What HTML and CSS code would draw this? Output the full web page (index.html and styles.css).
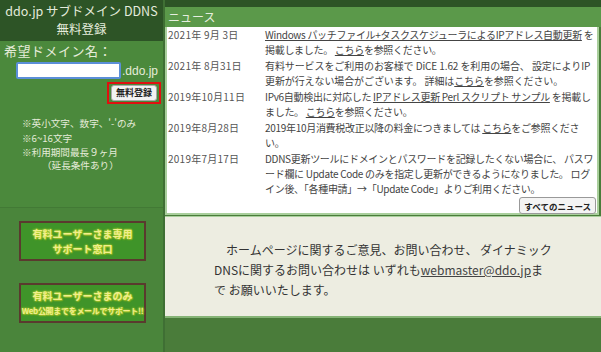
FILE: index.html
```html
<!DOCTYPE html>
<html lang="ja">
<head>
<meta charset="utf-8">
<link rel="stylesheet" href="styles.css">
</head>
<body>
<div class="page">
  <aside class="side">
    <div class="side-head">ddo.jp サブドメイン DDNS<br>無料登録</div>
    <div class="side-body">
      <div class="label">希望ドメイン名：</div>
      <div class="domain-row"><input class="domain-input" type="text"><span class="suffix">.ddo.jp</span></div>
      <div class="btn-row"><span class="btn-frame"><button class="btn">無料登録</button></span></div>
      <ul class="notes">
        <li>※英小文字、数字、'-'のみ</li>
        <li>※6~16文字</li>
        <li>※利用期間最長９ヶ月</li>
        <li class="indent">（延長条件あり）</li>
      </ul>
    </div>
    <div class="side-foot">
      <div class="banner"><span>有料ユーザーさま専用</span><span>サポート窓口</span></div>
      <div class="banner"><span>有料ユーザーさまのみ</span><span class="small">Web公開までをメールでサポート!!</span></div>
    </div>
  </aside>
  <main class="main">
    <div class="topstrip"></div>
    <div class="news-head">ニュース</div>
    <div class="news">
      <div class="row"><div class="date">2021年 9月 3日</div><div class="text"><a href="#">Windows パッチファイル+タスクスケジューラによるIPアドレス自動更新</a> を掲載しました。 <a href="#">こちら</a>を参照ください。</div></div>
      <div class="row"><div class="date">2021年 8月31日</div><div class="text loose">有料サービスをご利用のお客様で DiCE 1.62 を利用の場合、 設定によりIP更新が行えない場合がございます。 詳細は<a href="#">こちら</a>を参照ください。</div></div>
      <div class="row"><div class="date">2019年10月11日</div><div class="text">IPv6自動検出に対応した <a href="#">IPアドレス更新 Perl スクリプト サンプル</a> を掲載しました。 <a href="#">こちら</a>を参照ください。</div></div>
      <div class="row"><div class="date">2019年8月28日</div><div class="text">2019年10月消費税改正以降の料金につきましては <a href="#">こちら</a>をご参照ください。</div></div>
      <div class="row"><div class="date">2019年7月17日</div><div class="text">DDNS更新ツールにドメインとパスワードを記録したくない場合に、 パスワード欄に Update Code のみを指定し更新ができるようになりました。 ログイン後、「各種申請」→「Update Code」よりご利用ください。</div></div>
      <div class="more-row"><button class="more">すべてのニュース</button></div>
    </div>
    <div class="contact">
      <p>ホームページに関するご意見、お問い合わせ、 ダイナミックDNSに関するお問い合わせは いずれも<a href="#">webmaster@ddo.jp</a>まで お願いいたします。</p>
    </div>
  </main>
</div>
</body>
</html>
```

FILE: styles.css
```css
* { box-sizing: border-box; }
html, body { margin: 0; padding: 0; }
body {
  background: #4a7c3a;
  font-family: "Noto Sans CJK JP", "Noto Sans", sans-serif;
  width: 601px;
  height: 352px;
  overflow: hidden;
}
.page { display: flex; align-items: flex-start; }
.side {
  width: 165px;
  flex: none;
  border-right: 2px solid #3f6f34;
  background: #4a823b;
  height: 352px;
  display: flex;
  flex-direction: column;
}
.side-head {
  background: #2d5426;
  color: #e4ebdc;
  font-size: 12.5px;
  line-height: 18px;
  text-align: center;
  height: 41px;
  padding-top: 2px;
  white-space: nowrap;
}
.side-body {
  background: #4b893c;
  height: 167px;
  color: #e6ecda;
  border-bottom: 1px solid #427a35;
}
.label { font-size: 13px; line-height: 18px; padding: 1px 0 0 4px; letter-spacing: 0.5px; }
.domain-row { display: flex; align-items: center; padding: 2px 0 0 16px; }
.domain-input {
  width: 105px;
  height: 17px;
  border: 2px solid #5b8fd8;
  border-radius: 2px;
  background: #fff;
  padding: 0;
  outline: none;
}
.suffix { font-size: 12px; color: #e6ecda; margin-left: 1px; font-family: "Liberation Sans", sans-serif; }
.btn-row { display: flex; justify-content: flex-end; padding: 3px 2px 0 0; }
.btn-frame { border: 2px solid #e01010; padding: 1px 2px; display: inline-flex; }
.btn {
  font-family: inherit;
  font-size: 9px;
  font-weight: bold;
  color: #222;
  background: #f2f2f2;
  border: 1px solid #aaa;
  border-radius: 3px;
  padding: 1px 4px;
  height: 16px;
  line-height: 12px;
}
.notes { list-style: none; margin: 0; padding: 12px 0 0 22px; font-size: 9.6px; line-height: 14.5px; }
.notes li.indent { padding-left: 20px; line-height: 11px; }
.side-foot { flex: 1; background: #4a853b; padding: 13px 0 0 19px; }
.banner {
  width: 127px;
  height: 40px;
  border: 2px solid #5a3a2e;
  background: #3f9429;
  display: flex;
  flex-direction: column;
  align-items: center;
  justify-content: center;
  margin-bottom: 22px;
  color: #f0ee8c;
  font-weight: bold;
  font-size: 10px;
  line-height: 15px;
  text-shadow: 0 0 2px #b9d62a, 0 0 2px #b9d62a, 1px 1px 1px #7fa51e;
  white-space: nowrap;
}
.banner .small { font-size: 8px; letter-spacing: -0.3px; }
.main { flex: 1; display: flex; flex-direction: column; }
.topstrip { height: 7px; background: #2d5426; }
.news-head {
  height: 20px;
  background: #5b994a;
  color: #e6eedf;
  font-size: 12px;
  line-height: 20px;
  padding-left: 3px;
}
.news {
  background: #fff;
  border: 2px solid #a9cf9c;
  border-top: none;
  margin-right: 2px;
  padding: 0 1px 1px 1px;
  color: #444;
  font-size: 10px;
  line-height: 15px;
  height: 188px;
}
.row { display: flex; margin-bottom: 1px; }
.date { width: 97px; flex: none; color: #555; white-space: nowrap; letter-spacing: 0.25px; }
.text { flex: 1; letter-spacing: -0.3px; }
.text.loose { letter-spacing: -0.1px; }
.news a, .contact a { color: #444; text-decoration: underline; }
.more-row { display: flex; justify-content: flex-end; margin-top: 1px; }
.more {
  font-family: inherit;
  font-size: 8.5px;
  font-weight: bold;
  color: #222;
  background: #f4f4f4;
  border: 1px solid #999;
  border-radius: 3px;
  height: 17px;
  padding: 0 4px;
}
.contact {
  margin-top: 1px;
  background: #edede1;
  border-top: 1px solid #a9cf9c;
  border-bottom: 2px solid #86b476;
  height: 102px;
  padding-top: 23px;
}
.contact p {
  margin: 0 auto;
  width: 338px;
  font-size: 12px;
  line-height: 20px;
  color: #333;
  text-indent: 12px;
}
```
